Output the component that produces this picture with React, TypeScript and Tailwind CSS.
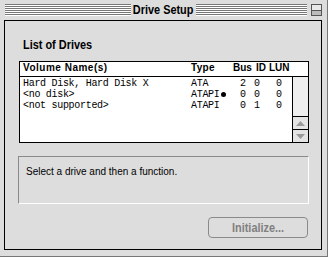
const chicago = { fontFamily: "'Liberation Sans', Arial, sans-serif" };
const monaco = { fontFamily: "'Liberation Mono', 'DejaVu Sans Mono', monospace" };
const geneva = { fontFamily: "'Liberation Sans', Arial, sans-serif" };

const drives = [
  { name: "Hard Disk, Hard Disk X", type: "ATA", dot: false, bus: "2", id: "0", lun: "0" },
  { name: "<no disk>", type: "ATAPI", dot: true, bus: "0", id: "0", lun: "0" },
  { name: "<not supported>", type: "ATAPI", dot: false, bus: "0", id: "1", lun: "0" },
];

function Stripes({ className }: { className: string }) {
  return (
    <div className={`flex flex-col h-[12px] ${className}`}>
      {[0, 1, 2, 3, 4, 5].map((i) => (
        <div key={i} className="h-[2px] border-t border-[#777] border-b border-b-white" />
      ))}
    </div>
  );
}

function Triangle({ up }: { up: boolean }) {
  return (
    <svg width="9" height="5" viewBox="0 0 9 5">
      <path d={up ? "M0 5 L4.5 0 L9 5 Z" : "M0 0 L4.5 5 L9 0 Z"} fill="#9a9a9a" />
    </svg>
  );
}

// Charcoal-ish label: bold sans squeezed horizontally
function Condensed({ children, className = "" }: { children: string; className?: string }) {
  return (
    <span className={`inline-block whitespace-nowrap font-bold scale-x-[0.84] ${className}`} style={chicago}>
      {children}
    </span>
  );
}

export default function App() {
  return (
    <div className="w-[328px] h-[257px] bg-[#dddddd] flex flex-col overflow-hidden border-r border-b border-[#777]">
      {/* Title bar */}
      <div className="h-[20px] flex items-start pt-[4px] pl-[5px]">
        <Stripes className="w-[126px]" />
        <div className="w-[65px] -mt-[4px] h-[20px] flex items-center justify-center text-[13px] text-black">
          <Condensed>Drive Setup</Condensed>
        </div>
        <Stripes className="w-[111px]" />
        <div className="ml-[4px] w-[11px] h-[12px] border border-[#555] bg-[#c8c8c8] flex flex-col">
          <div className="flex-1 border-b border-[#555] bg-[#e8e8e8]" />
          <div className="flex-1 bg-[#bbbbbb]" />
        </div>
      </div>

      {/* Content */}
      <div className="ml-[4px] w-[318px] h-[230px] border border-black bg-[#dddddd] flex flex-col">
        <div className="ml-[18px] mt-[16px] h-[14px] leading-[14px] text-[13px] text-black">
          <Condensed className="origin-left">List of Drives</Condensed>
        </div>

        {/* Drive list */}
        <div className="ml-[14px] mt-[10px] w-[290px] h-[82px] border border-black bg-white flex flex-col">
          <div className="h-[15px] border-b border-black flex items-end pb-[1px] text-[10px] font-bold text-black" style={geneva}>
            <div className="w-[171px] pl-[3px] tracking-[0.5px]">Volume Name(s)</div>
            <div className="w-[42px] tracking-[0.3px]">Type</div>
            <div className="w-[23px]">Bus</div>
            <div className="w-[13px]">ID</div>
            <div>LUN</div>
          </div>
          <div className="flex-1 flex">
            <div className="flex-1 pt-[1px]">
              {drives.map((d) => (
                <div key={d.name} className="h-[11px] leading-[11px] flex text-[10px] tracking-[-0.3px] text-black whitespace-pre" style={monaco}>
                  <div className="w-[171px] pl-[3px]">{d.name}</div>
                  <div className="w-[49px] flex items-center">
                    {d.type}
                    {d.dot && <span className="ml-[1px] w-[5px] h-[5px] rounded-full bg-black" />}
                  </div>
                  <div className="w-[14px]">{d.bus}</div>
                  <div className="w-[22px]">{d.id}</div>
                  <div>{d.lun}</div>
                </div>
              ))}
            </div>
            <div className="w-[16px] border-l border-black bg-[#eeeeee] flex flex-col justify-end">
              <div className="h-[13px] border-t border-black flex items-center justify-center bg-[#e4e4e4]">
                <Triangle up />
              </div>
              <div className="h-[13px] border-t border-black flex items-center justify-center bg-[#e4e4e4]">
                <Triangle up={false} />
              </div>
            </div>
          </div>
        </div>

        {/* Status */}
        <div className="ml-[13px] mt-[13px] w-[291px] h-[48px] border border-t-[#8a8a8a] border-l-[#8a8a8a] border-b-white border-r-white pl-[7px] pt-[7px] text-[10px] text-black" style={geneva}>
          Select a drive and then a function.
        </div>

        {/* Button */}
        <div className="mt-[13px] mr-[13px] self-end w-[100px] h-[21px] rounded-[4px] border border-[#8a8a8a] flex items-center justify-center text-[13px] text-[#808080]">
          <Condensed>Initialize...</Condensed>
        </div>
      </div>
    </div>
  );
}
